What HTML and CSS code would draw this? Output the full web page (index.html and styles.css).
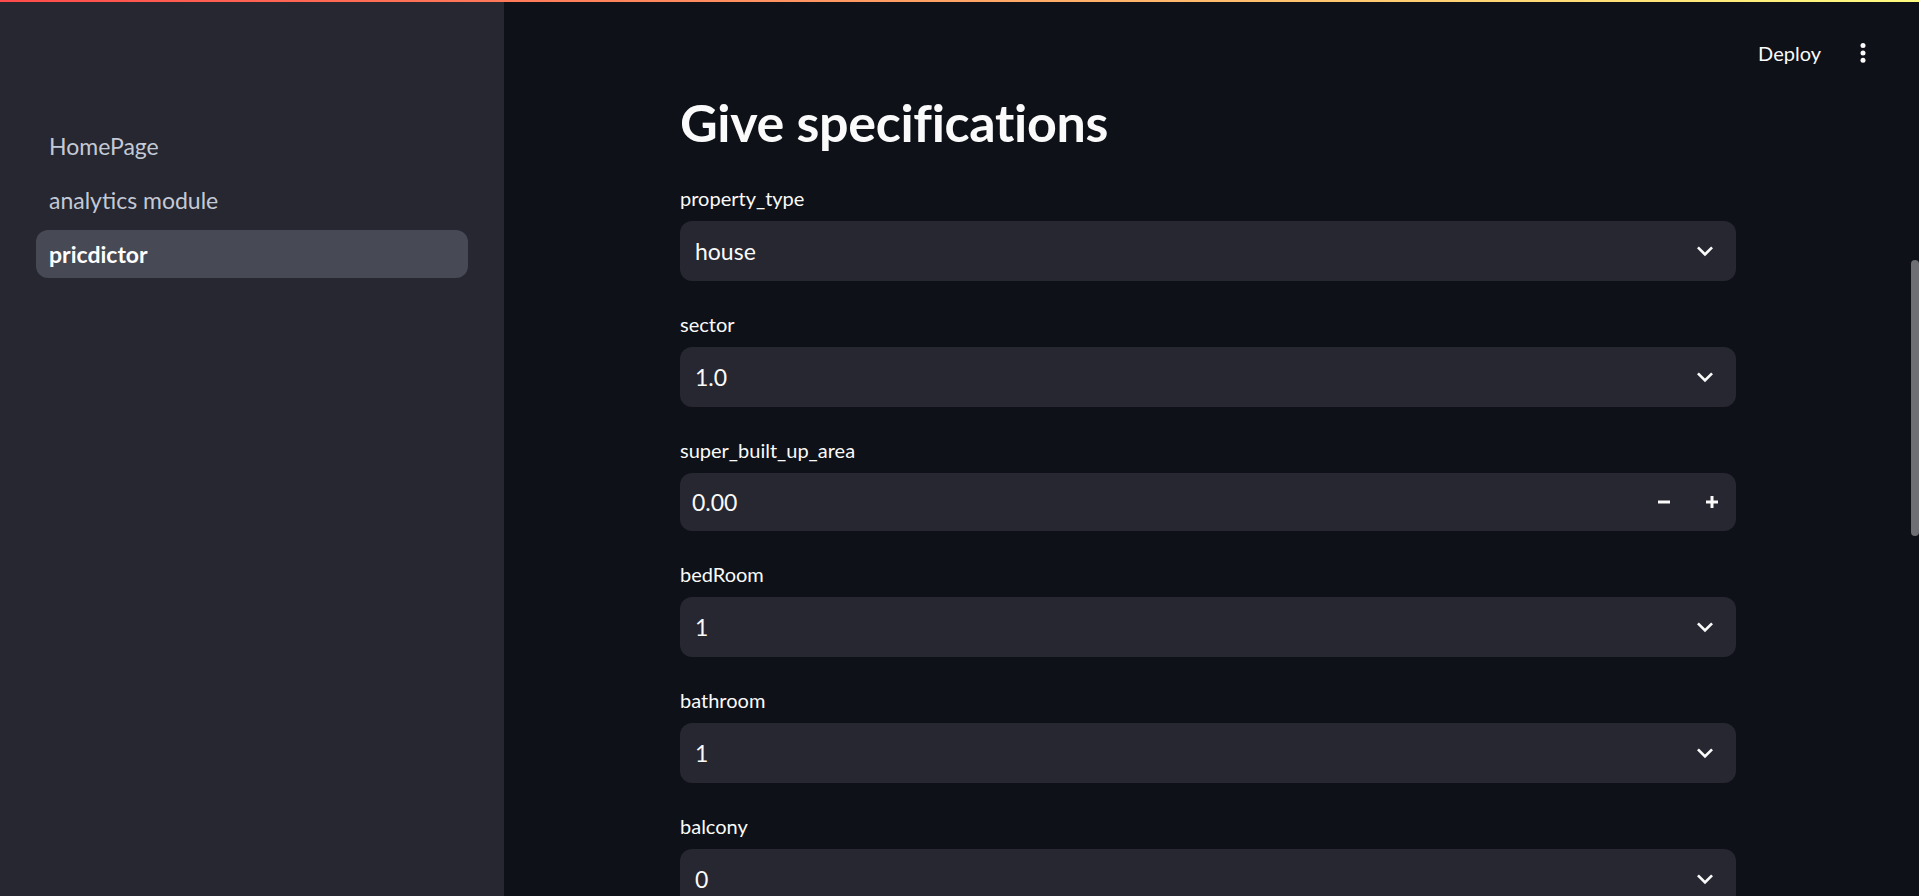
FILE: index.html
```html
<!DOCTYPE html>
<html lang="en">
<head>
<meta charset="utf-8">
<title>pricdictor</title>
<link rel="stylesheet" href="styles.css">
</head>
<body>
<div class="decoration"></div>
<div class="app">
  <aside class="sidebar">
    <nav class="nav">
      <a class="nav-item">HomePage</a>
      <a class="nav-item">analytics module</a>
      <a class="nav-item active">pricdictor</a>
    </nav>
  </aside>
  <main class="main">
    <header class="header">
      <span class="deploy">Deploy</span>
      <span class="menu">
        <svg width="24" height="24" viewBox="0 0 24 24"><circle cx="12" cy="4.6" r="2.5" fill="#fafafa"/><circle cx="12" cy="12" r="2.5" fill="#fafafa"/><circle cx="12" cy="19.3" r="2.5" fill="#fafafa"/></svg>
      </span>
    </header>
    <section class="content">
      <h1 class="title">Give specifications</h1>

      <div class="field">
        <div class="label">property_type</div>
        <div class="select"><span class="value">house</span>
          <svg class="chev" width="32" height="32" viewBox="0 0 24 24"><path d="M16.59 8.59L12 13.17 7.41 8.59 6 10l6 6 6-6z" fill="#fafafa"/></svg></div>
      </div>

      <div class="field">
        <div class="label">sector</div>
        <div class="select"><span class="value">1.0</span>
          <svg class="chev" width="32" height="32" viewBox="0 0 24 24"><path d="M16.59 8.59L12 13.17 7.41 8.59 6 10l6 6 6-6z" fill="#fafafa"/></svg></div>
      </div>

      <div class="field">
        <div class="label">super_built_up_area</div>
        <div class="number">
          <span class="num-value">0.00</span>
          <span class="step"><svg width="14" height="14" viewBox="0 0 14 14"><rect x="1" y="5.5" width="12" height="3" fill="#fafafa"/></svg></span>
          <span class="step"><svg width="14" height="14" viewBox="0 0 14 14"><rect x="1" y="5.5" width="12" height="3" fill="#fafafa"/><rect x="5.5" y="1" width="3" height="12" fill="#fafafa"/></svg></span>
        </div>
      </div>

      <div class="field">
        <div class="label">bedRoom</div>
        <div class="select"><span class="value">1</span>
          <svg class="chev" width="32" height="32" viewBox="0 0 24 24"><path d="M16.59 8.59L12 13.17 7.41 8.59 6 10l6 6 6-6z" fill="#fafafa"/></svg></div>
      </div>

      <div class="field">
        <div class="label">bathroom</div>
        <div class="select"><span class="value">1</span>
          <svg class="chev" width="32" height="32" viewBox="0 0 24 24"><path d="M16.59 8.59L12 13.17 7.41 8.59 6 10l6 6 6-6z" fill="#fafafa"/></svg></div>
      </div>

      <div class="field">
        <div class="label">balcony</div>
        <div class="select"><span class="value">0</span>
          <svg class="chev" width="32" height="32" viewBox="0 0 24 24"><path d="M16.59 8.59L12 13.17 7.41 8.59 6 10l6 6 6-6z" fill="#fafafa"/></svg></div>
      </div>
    </section>
    <div class="scrollbar"></div>
  </main>
</div>
</body>
</html>
```
FILE: styles.css
```css
* { box-sizing: border-box; }
html, body { margin: 0; padding: 0; }
body {
  background: #0e1117;
  color: #fafafa;
  font-family: Lato, "Liberation Sans", sans-serif;
  height: 896px;
  overflow: hidden;
}
.decoration {
  position: absolute;
  top: 0; left: 0; right: 0;
  height: 2px;
  background: linear-gradient(90deg, #ff4b4b, #fffd80);
  z-index: 5;
}
.app { display: flex; height: 896px; }
.sidebar {
  width: 504px;
  flex: 0 0 504px;
  background: #262730;
  padding: 122px 36px 0 36px;
}
.nav { display: flex; flex-direction: column; gap: 6px; }
.nav-item {
  height: 48px;
  display: flex;
  align-items: center;
  padding: 0 13px;
  border-radius: 12px;
  font-size: 23px;
  color: #c3c9d6;
}
.nav-item.active {
  background: #474955;
  color: #ffffff;
  font-weight: 700;
}
.main {
  flex: 1;
  position: relative;
  padding-right: 7px;
  display: flex;
  flex-direction: column;
}
.header {
  height: 80px;
  display: flex;
  justify-content: flex-end;
  align-items: flex-start;
  padding: 41px 29px 0 0;
}
.deploy { font-size: 20px; line-height: 24px; margin-right: 22px; }
.menu { width: 40px; display: flex; justify-content: center; }
.content { width: 1056px; margin: 0 auto; padding-top: 26px; }
.title {
  font-size: 52px;
  line-height: 62px;
  font-weight: 700;
  margin: 0 0 26px 0;
  letter-spacing: -0.3px;
}
.field { margin-bottom: 24px; }
.label {
  height: 36px;
  display: flex;
  align-items: center;
  font-size: 20px;
  padding-top: 2px;
  margin-bottom: 6px;
}
.select {
  height: 60px;
  background: #262730;
  border-radius: 12px;
  display: flex;
  align-items: center;
  justify-content: space-between;
  padding: 0 15px 0 15px;
}
.value { font-size: 23px; }
.chev { display: block; }
.number {
  height: 58px;
  margin: 1px 0 3px 0;
  background: #262730;
  border-radius: 12px;
  display: flex;
  align-items: center;
  padding-left: 12px;
}
.num-value { font-size: 23px; flex: 1; }
.step {
  width: 48px;
  height: 58px;
  display: flex;
  align-items: center;
  justify-content: center;
}
.scrollbar {
  position: absolute;
  right: 0;
  top: 260px;
  width: 8px;
  height: 276px;
  background: #6e6f74;
  border-radius: 4px;
}
```
